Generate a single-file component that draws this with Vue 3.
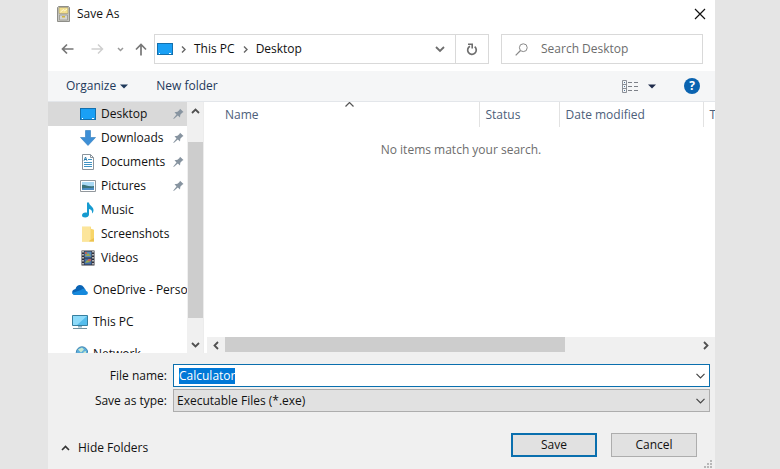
<script setup>
import { ref, onMounted } from 'vue'

const fileName = ref('Calculator')
const fileType = ref('Executable Files (*.exe)')
const query = ref('')
const nameInput = ref(null)

const quick = [
  { label: 'Desktop', icon: 'desktop', pinned: true, selected: true },
  { label: 'Downloads', icon: 'download', pinned: true },
  { label: 'Documents', icon: 'document', pinned: true },
  { label: 'Pictures', icon: 'picture', pinned: true },
  { label: 'Music', icon: 'music' },
  { label: 'Screenshots', icon: 'folder' },
  { label: 'Videos', icon: 'video' },
]
const roots = [
  { label: 'OneDrive - Personal', icon: 'cloud' },
  { label: 'This PC', icon: 'pc' },
  { label: 'Network', icon: 'network' },
]
const items = [
  ...quick,
  ...roots.map((r) => ({ ...r, root: true })),
]

onMounted(() => {
  nameInput.value.focus()
  nameInput.value.select()
})
</script>

<template>
  <main class="stage">
    <section class="dialog" role="dialog" aria-labelledby="dialog-title">
      <header class="titlebar">
        <svg class="app-icon" width="13" height="16" viewBox="0 0 13 16">
          <path d="M1.5.5h10l1 1v14H.5v-14z" fill="#c6c6c2" stroke="#8e8e88" />
          <path d="M2 1.500h9v6H2z" fill="#f2df8c" stroke="#aaa077" stroke-width=".7" />
          <path d="M3.500 6l3-2.500 1 1.500 2.500-2" fill="none" stroke="#fff8d8" />
          <path d="M2.500 9h8v5h-8z" fill="#d6d6d2" stroke="#98988e" stroke-width=".8" />
          <path d="M5 10h3v1.500H5z" fill="#d0b53b" />
        </svg>
        <h1 id="dialog-title">Save As</h1>
        <button class="close" type="button" aria-label="Close">
          <svg width="12" height="12" viewBox="0 0 12 12"><path d="M1 1l10 10M11 1L1 11" stroke="#111" stroke-width="1.200" /></svg>
        </button>
      </header>

      <nav class="navbar" aria-label="Location">
        <div class="history">
          <button type="button" aria-label="Back">
            <svg width="13" height="12" viewBox="0 0 13 12"><path d="M12.500 6H1.500M6 1.500L1.500 6 6 10.500" fill="none" stroke="#777" stroke-width="1.700" /></svg>
          </button>
          <button type="button" aria-label="Forward">
            <svg width="13" height="12" viewBox="0 0 13 12"><path d="M.5 6h11M7 1.500L11.500 6 7 10.500" fill="none" stroke="#cfcfcf" stroke-width="1.500" /></svg>
          </button>
          <button type="button" class="recent" aria-label="Recent locations">
            <svg width="7" height="5" viewBox="0 0 7 5"><path d="M1 1l2.500 2.500L6 1" fill="none" stroke="#999" stroke-width="1.500" /></svg>
          </button>
          <button type="button" aria-label="Up">
            <svg width="12" height="13" viewBox="0 0 12 13"><path d="M6 12.500V1.500M1 6.500l5-5 5 5" fill="none" stroke="#777" stroke-width="1.700" /></svg>
          </button>
        </div>
        <div class="address">
          <svg width="16" height="12" viewBox="0 0 16 12"><rect x=".5" y=".5" width="15" height="11" fill="#1aa0f5" stroke="#1470ad" /><path d="M2 10.500h1M12 10.500h2" stroke="#fff" /></svg>
          <svg class="sep" width="5" height="7" viewBox="0 0 5 7"><path d="M1 .5l3 3-3 3" fill="none" stroke="#666" stroke-width="1.400" /></svg>
          <button type="button" class="crumb">This PC</button>
          <svg class="sep" width="5" height="7" viewBox="0 0 5 7"><path d="M1 .5l3 3-3 3" fill="none" stroke="#666" stroke-width="1.400" /></svg>
          <button type="button" class="crumb">Desktop</button>
          <button type="button" class="previous" aria-label="Previous locations">
            <svg width="10" height="7" viewBox="0 0 10 7"><path d="M1 1l4 4 4-4" fill="none" stroke="#6e6e6e" stroke-width="1.800" /></svg>
          </button>
          <button type="button" class="refresh" aria-label="Refresh">
            <svg width="12" height="13" viewBox="0 0 12 13"><path d="M8.700 3.700A4.300 4.300 0 1 1 4 3.200" fill="none" stroke="#6e6e6e" stroke-width="1.700" /><path d="M2 1.200h4.200v4.300" fill="none" stroke="#6e6e6e" stroke-width="1.600" /></svg>
          </button>
        </div>
        <label class="search">
          <svg width="13" height="13" viewBox="0 0 13 13"><circle cx="8.300" cy="4.700" r="3.900" fill="none" stroke="#888" /><path d="M5.500 7.500L.7 12.300" stroke="#888" stroke-width="1.200" /></svg>
          <input v-model="query" type="search" placeholder="Search Desktop" aria-label="Search Desktop" />
        </label>
      </nav>

      <div class="toolbar">
        <button type="button">Organize
          <svg width="8" height="5" viewBox="0 0 8 5"><path d="M0 .5h8L4 4.500z" fill="#1e395b" /></svg>
        </button>
        <button type="button">New folder</button>
        <button type="button" class="view" aria-label="Change your view">
          <svg width="17" height="13" viewBox="0 0 17 13">
            <path d="M.5.5h4v12h-4zM.5 4.500h4M.5 8.500h4" fill="none" stroke="#8b8f96" />
            <path d="M2 2.500h1M2 6.500h1M2 10.500h1" stroke="#53789b" />
            <path d="M6 2.500h4M12 2.500h4M6 6.500h4M12 6.500h4M6 10.500h4M12 10.500h4" stroke="#7d8188" />
          </svg>
          <svg width="8" height="5" viewBox="0 0 8 5"><path d="M0 .5h8L4 4.500z" fill="#1e2b4b" /></svg>
        </button>
        <button type="button" class="help" aria-label="Help">?</button>
      </div>

      <div class="browser">
        <aside class="tree">
          <ul>
            <li v-for="item in items" :key="item.label" :class="{ root: item.root, selected: item.selected }">
              <a href="#">
                <svg class="item-icon" width="16" height="16" viewBox="0 0 16 16" aria-hidden="true">
                  <template v-if="item.icon === 'desktop'">
                    <rect x=".5" y="2.500" width="15" height="11" fill="#1aa0f5" stroke="#1470ad" />
                    <path d="M2 12.500h1M12 12.500h2" stroke="#fff" />
                  </template>
                  <path v-else-if="item.icon === 'download'" d="M5.500.5h5v7h5L8 15.500.5 7.500h5z" fill="#3d8fd6" stroke="#2f7cbc" stroke-width=".6" />
                  <template v-else-if="item.icon === 'document'">
                    <path d="M2.500.5h8l3 3v12h-11z" fill="#fff" stroke="#8a949c" />
                    <path d="M10.500.5v3h3" fill="none" stroke="#8a949c" />
                    <path d="M8 5.500h4M4 8.500h8M4 10.500h8M4 12.500h8" stroke="#3f93c4" />
                    <path d="M4 6.800L5.500 3 7 6.800M4.500 5.500h2" fill="none" stroke="#317fae" />
                  </template>
                  <template v-else-if="item.icon === 'picture'">
                    <path d="M.5 2.500h15v11H.5z" fill="#fff" stroke="#92989d" />
                    <path d="M2 4h12v8H2z" fill="#a9d9f4" />
                    <path d="M2 7c3-1 5 2 12 1v4H2z" fill="#3a7279" />
                    <path d="M2 10.500c4-1 7 0 12-1V12H2z" fill="#4c8dc4" />
                  </template>
                  <path v-else-if="item.icon === 'music'" d="M7 .5h2c0 3 4.500 4 4.500 7.500 0 1.500-.5 2.500-1.500 3.500.5-3-1-4-3-4.500v5.500c0 1.800-1.800 3-3.800 3S2 14.500 2 13.200s1.600-2.700 3.500-2.700c.6 0 1 .1 1.500.3z" fill="#169bd0" />
                  <template v-else-if="item.icon === 'folder'">
                    <path d="M2 .8h9v2l3 1v11.700H2z" fill="#f8d568" />
                    <path d="M2 .8h8.500v12.700l-2 2H2z" fill="#fce59b" />
                    <path d="M10.500 14l3.500-2v3.500H9z" fill="#ecc24f" />
                  </template>
                  <template v-else-if="item.icon === 'video'">
                    <path d="M1.500.5h13v15h-13z" fill="#303038" />
                    <path d="M3 1v14M13 1v14" stroke="#e7e7e7" stroke-width="1.400" stroke-dasharray="1.500 1.500" />
                    <path d="M4.500 1.500h7v6h-7z" fill="#5689bc" /><path d="M4.500 8.500h7v6h-7z" fill="#436eac" />
                    <path d="M5 6l3-3 3 3zM5 13l2-3 4 2z" fill="#9ca74f" /><path d="M8 9h3v2H8zM5 2h2v2H5z" fill="#be655c" />
                  </template>
                  <template v-else-if="item.icon === 'cloud'">
                    <path d="M3.500 7C4.500 2.500 9.500 1.500 12 5.500L13.500 8 10 13H3.500C-.8 13-1 7.500 3.500 7z" fill="#0a64b5" />
                    <path d="M9 8c2-2.500 5-1 5 1 2.600.4 2.500 4-.5 4H3.500C1.500 13 .5 12 .2 11z" fill="#1689dc" />
                  </template>
                  <template v-else-if="item.icon === 'pc'">
                    <path d="M.5 1.500h15v10H.5z" fill="#55bdec" stroke="#367f9f" />
                    <path d="M1 2h14L5 11H1z" fill="#8ddbfa" /><path d="M6 12h4v1.500H6z" fill="#8cb3c4" />
                    <path d="M1 14.500h14" stroke="#71919f" />
                  </template>
                  <template v-else>
                    <circle cx="10" cy="6.500" r="5.700" fill="#5caddc" stroke="#3f86b2" />
                    <path d="M6 3.500l4-2 2 2-3 3zM11 6l3-1v4z" fill="#c5e8d0" />
                    <path d="M.5 7.500h9v6h-9z" fill="#3b99cb" stroke="#357492" />
                  </template>
                </svg>
                <span>{{ item.label }}</span>
              </a>
              <svg v-if="item.pinned" class="pin" width="11" height="12" viewBox="0 0 11 12"><path d="M7 .7L10.500 4 9.200 4.800 7.300 6.700 7 9.500 4.800 7.600.8 11 .3 10.600 3.500 6.400 1.500 4.200 4.500 3.800 6.500 2z" fill="#8794a0" /></svg>
            </li>
          </ul>
          <div class="vscroll">
            <button type="button" aria-label="Scroll up"><svg width="9" height="6" viewBox="0 0 9 6"><path d="M1 5l3.500-3.500L8 5" fill="none" stroke="#505050" stroke-width="1.800" /></svg></button>
            <div class="vtrack"><div class="vthumb"></div></div>
            <button type="button" aria-label="Scroll down"><svg width="9" height="6" viewBox="0 0 9 6"><path d="M1 1l3.500 3.500L8 1" fill="none" stroke="#505050" stroke-width="1.800" /></svg></button>
          </div>
        </aside>

        <div class="files">
          <div class="listing">
            <table>
              <colgroup><col class="c-name" /><col class="c-status" /><col class="c-date" /><col /></colgroup>
              <thead>
                <tr>
                  <th scope="col" aria-sort="ascending">Name
                    <svg class="sort" width="9" height="5" viewBox="0 0 9 5"><path d="M.5 4.500l4-4 4 4" fill="none" stroke="#555" stroke-width="1.200" /></svg>
                  </th>
                  <th scope="col">Status</th>
                  <th scope="col">Date modified</th>
                  <th scope="col">Type</th>
                </tr>
              </thead>
            </table>
            <p class="empty">No items match your search.</p>
          </div>
          <div class="hscroll">
            <button type="button" aria-label="Scroll left"><svg width="6" height="9" viewBox="0 0 6 9"><path d="M5 1L1.500 4.500 5 8" fill="none" stroke="#505050" stroke-width="1.800" /></svg></button>
            <div class="htrack"><div class="hthumb"></div></div>
            <button type="button" aria-label="Scroll right"><svg width="6" height="9" viewBox="0 0 6 9"><path d="M1 1l3.500 3.500L1 8" fill="none" stroke="#505050" stroke-width="1.800" /></svg></button>
          </div>
        </div>
      </div>

      <form class="details" @submit.prevent>
        <div class="fields">
          <label for="file-name">File name:</label>
          <div class="combo editable">
            <input id="file-name" ref="nameInput" v-model="fileName" type="text" autocomplete="off" spellcheck="false" />
            <svg width="9" height="6" viewBox="0 0 9 6"><path d="M.5.8l4 4 4-4" fill="none" stroke="#444" stroke-width="1.200" /></svg>
          </div>
          <label for="file-type">Save as type:</label>
          <div class="combo">
            <select id="file-type" v-model="fileType"><option>Executable Files (*.exe)</option></select>
            <svg width="9" height="6" viewBox="0 0 9 6"><path d="M.5.8l4 4 4-4" fill="none" stroke="#444" stroke-width="1.200" /></svg>
          </div>
        </div>
        <footer class="actions">
          <button type="button" class="hide">
            <svg width="9" height="6" viewBox="0 0 9 6"><path d="M1 5l3.500-3.500L8 5" fill="none" stroke="#333" stroke-width="1.600" /></svg>
            Hide Folders
          </button>
          <button type="submit" class="push primary">Save</button>
          <button type="button" class="push">Cancel</button>
        </footer>
        <svg class="grip" width="8" height="8" viewBox="0 0 8 8"><path d="M6 0h2v2H6zM3 3h2v2H3zM6 3h2v2H6zM0 6h2v2H0zM3 6h2v2H3zM6 6h2v2H6z" fill="#b8b8b8" /></svg>
      </form>
    </section>
  </main>
</template>

<style>
body {
  margin: 0;
  background: #e5e5e5;
}
</style>

<style scoped>
* {
  box-sizing: border-box;
}
.stage {
  display: flex;
  min-height: 100vh;
  padding: 0 65px 0 48px;
  font: 12px/16px "Open Sans", "Noto Sans", sans-serif;
  color: #111;
}
.dialog {
  flex: 1;
  min-width: 0;
  display: flex;
  flex-direction: column;
  background: #fff;
}
svg {
  display: block;
  flex: none;
}
button {
  display: flex;
  align-items: center;
  justify-content: center;
  border: 0;
  padding: 0;
  background: none;
  font: inherit;
  color: inherit;
  white-space: nowrap;
}
input,
select {
  font: inherit;
  color: inherit;
  border: 0;
  outline: 0;
  background: none;
  min-width: 0;
}
.titlebar {
  display: flex;
  align-items: center;
  height: 27px;
  padding: 0 9px;
}
h1 {
  flex: 1;
  margin: 0 0 0 7px;
  font-size: 12px;
  font-weight: 400;
}
.navbar {
  display: flex;
  align-items: center;
  height: 44px;
  padding: 0 12px 0 13px;
}
.history {
  flex: none;
  display: flex;
  align-items: center;
  gap: 17px;
  width: 93px;
}
.recent {
  margin: 0 -6px 0 -4px;
}
.address {
  flex: 1;
  display: flex;
  align-items: center;
  height: 30px;
  border: 1px solid #d9d9d9;
  padding-left: 2px;
}
.sep {
  margin: 0 8px;
}
.previous {
  margin-left: auto;
  width: 30px;
  height: 28px;
}
.refresh {
  width: 33px;
  height: 28px;
  border-left: 1px solid #d9d9d9;
}
.search {
  flex: none;
  width: 202px;
  display: flex;
  align-items: center;
  gap: 13px;
  height: 30px;
  margin-left: 12px;
  padding-left: 13px;
  border: 1px solid #d9d9d9;
}
.search input {
  flex: 1;
  padding: 0;
}
.search input::placeholder {
  color: #6d6d6d;
  opacity: 1;
}
.toolbar {
  display: flex;
  align-items: center;
  gap: 28px;
  height: 31px;
  padding: 0 15px 0 18px;
  border-bottom: 1px solid #e3e6ea;
  background: #f5f6f7;
  color: #1e395b;
}
.toolbar button {
  gap: 4px;
}
.toolbar .view {
  margin-left: auto;
  gap: 9px;
}
.toolbar .help {
  width: 16px;
  height: 16px;
  border-radius: 50%;
  background: #0a63b0;
  color: #fff;
  font-weight: 700;
}
.browser {
  flex: 1;
  display: flex;
  height: 251px;
  min-height: 251px;
}
.tree {
  flex: none;
  display: flex;
  width: 156px;
  height: 251px;
  border-right: 1px solid #ececec;
}
.tree ul {
  flex: 1;
  min-width: 0;
  margin: 0;
  padding: 0;
  list-style: none;
  overflow: hidden;
}
.tree li {
  display: flex;
  align-items: center;
  height: 24px;
  padding: 0 3px 0 32px;
}
.tree .root {
  margin-top: 8px;
  padding: 0 0 0 24px;
}
.tree .selected {
  background: #d9d9d9;
}
.tree a {
  flex: 1;
  min-width: 0;
  display: flex;
  align-items: center;
  gap: 5px;
  overflow: hidden;
  white-space: nowrap;
  color: inherit;
  text-decoration: none;
}
.vscroll {
  display: flex;
  flex-direction: column;
  width: 16px;
  background: #f0f0f0;
}
.vscroll button {
  height: 17px;
}
.vtrack {
  flex: 1;
  padding: 23px 0 0 1px;
}
.vthumb {
  height: 176px;
  background: #cdcdcd;
}
.files {
  flex: 1;
  min-width: 0;
  display: flex;
  flex-direction: column;
  padding-left: 3px;
}
.listing {
  flex: 1;
  overflow: hidden;
}
table {
  width: 100%;
  border-collapse: collapse;
  table-layout: fixed;
  color: #4c607a;
}
.c-name {
  width: 272px;
}
.c-status {
  width: 80px;
}
.c-date {
  width: 144px;
}
th {
  position: relative;
  height: 25px;
  padding: 0 0 0 6px;
  border-right: 1px solid #e2e2e2;
  font-weight: 400;
  text-align: left;
  white-space: nowrap;
  overflow: hidden;
}
th:first-child {
  padding-left: 18px;
}
th:last-child {
  border-right: 0;
}
.sort {
  position: absolute;
  top: 0;
  left: 51%;
}
.empty {
  margin: 15px 0 0;
  text-align: center;
  color: #6d6d6d;
}
.hscroll {
  display: flex;
  height: 16px;
  background: #f0f0f0;
}
.hscroll button {
  width: 18px;
}
.htrack {
  flex: 1;
  display: flex;
}
.hthumb {
  width: 72%;
  height: 15px;
  background: #cdcdcd;
}
.details {
  position: relative;
  height: 116px;
  padding: 11px 5px 0 13px;
  background: #f0f0f0;
}
.fields {
  display: grid;
  grid-template-columns: 106px 1fr;
  gap: 2px 6px;
  align-items: center;
}
.fields label {
  text-align: right;
}
.combo {
  position: relative;
  display: flex;
  height: 23px;
  border: 1px solid #adadad;
  background: #e1e1e1;
}
.combo.editable {
  border-color: #0a6fae;
  background: #fff;
}
.combo input,
.combo select {
  flex: 1;
  padding: 0 20px 0 3px;
  appearance: none;
}
.combo input {
  padding-left: 5px;
}
.combo input::selection {
  background: #0078d7;
  color: #fff;
}
.combo svg {
  position: absolute;
  top: 8px;
  right: 4px;
  pointer-events: none;
}
.actions {
  display: flex;
  align-items: center;
  gap: 14px;
  margin-top: 21px;
  padding-right: 13px;
}
.hide {
  gap: 8px;
  margin: 5px auto 0 0;
}
.push {
  width: 86px;
  height: 24px;
  border: 1px solid #adadad;
  background: #e1e1e1;
}
.primary {
  border: 2px solid #0a6fae;
}
.grip {
  position: absolute;
  right: 3px;
  bottom: 1px;
}
</style>
